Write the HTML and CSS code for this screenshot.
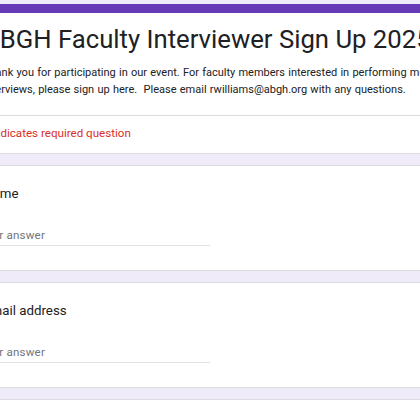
FILE: index.html
```html
<!DOCTYPE html>
<html>
<head>
<meta charset="utf-8">
<link rel="stylesheet" href="styles.css">
</head>
<body>
<div class="form">
  <section class="card header-card">
    <div class="header-main">
      <h1 class="form-title">ABGH Faculty Interviewer Sign Up 2025</h1>
      <p class="form-desc">Thank you for participating in our event. For faculty members interested in performing mock interviews, please sign up here.&nbsp; Please email rwilliams@abgh.org with any questions.</p>
    </div>
    <div class="required-note">* Indicates required question</div>
  </section>
  <section class="card question">
    <div class="q-title">Name</div>
    <div class="answer">Your answer</div>
  </section>
  <section class="card question">
    <div class="q-title">Email address</div>
    <div class="answer">Your answer</div>
  </section>
  <section class="card next"></section>
</div>
</body>
</html>
```
FILE: styles.css
```css
html, body {
  margin: 0;
  padding: 0;
}
body {
  background: #f0ebf8;
  font-family: Roboto, "Liberation Sans", Arial, sans-serif;
  color: #202124;
  overflow: hidden;
  height: 420px;
}
.form {
  margin-left: -38px;
  width: 531px;
  padding-top: 4px;
  display: flex;
  flex-direction: column;
  gap: 11px;
}
.card {
  background: #fff;
  border: 1px solid #dadce0;
  border-radius: 7px;
  padding-left: 20px;
  padding-right: 20px;
}
.header-card {
  border-top: 9px solid #673ab7;
  padding-left: 0;
  padding-right: 0;
}
.header-main {
  padding: 10px 20px 17px 20px;
  border-bottom: 1px solid #dadce0;
}
.form-title {
  margin: 0;
  font-weight: 400;
  font-size: 25.7px;
  line-height: 33px;
  color: #202124;
}
.form-desc {
  margin: 9px 0 0 0;
  font-size: 11px;
  line-height: 16.6px;
  color: #202124;
  word-spacing: 0.5px;
}
.required-note {
  padding: 9px 20px 11px 20px;
  font-size: 11.6px;
  line-height: 16.6px;
  color: #d93025;
}
.question {
  height: 106px;
  box-sizing: border-box;
  padding-top: 18px;
}
.q-title {
  font-size: 13.3px;
  line-height: 20px;
  color: #202124;
}
.answer {
  margin-top: 23px;
  margin-left: -4px;
  width: 231px;
  font-size: 11.6px;
  line-height: 16px;
  color: #70757a;
  padding-bottom: 2px;
  border-bottom: 1px solid #e3e3e3;
  letter-spacing: 0.2px;
}
.next {
  height: 60px;
}
```
